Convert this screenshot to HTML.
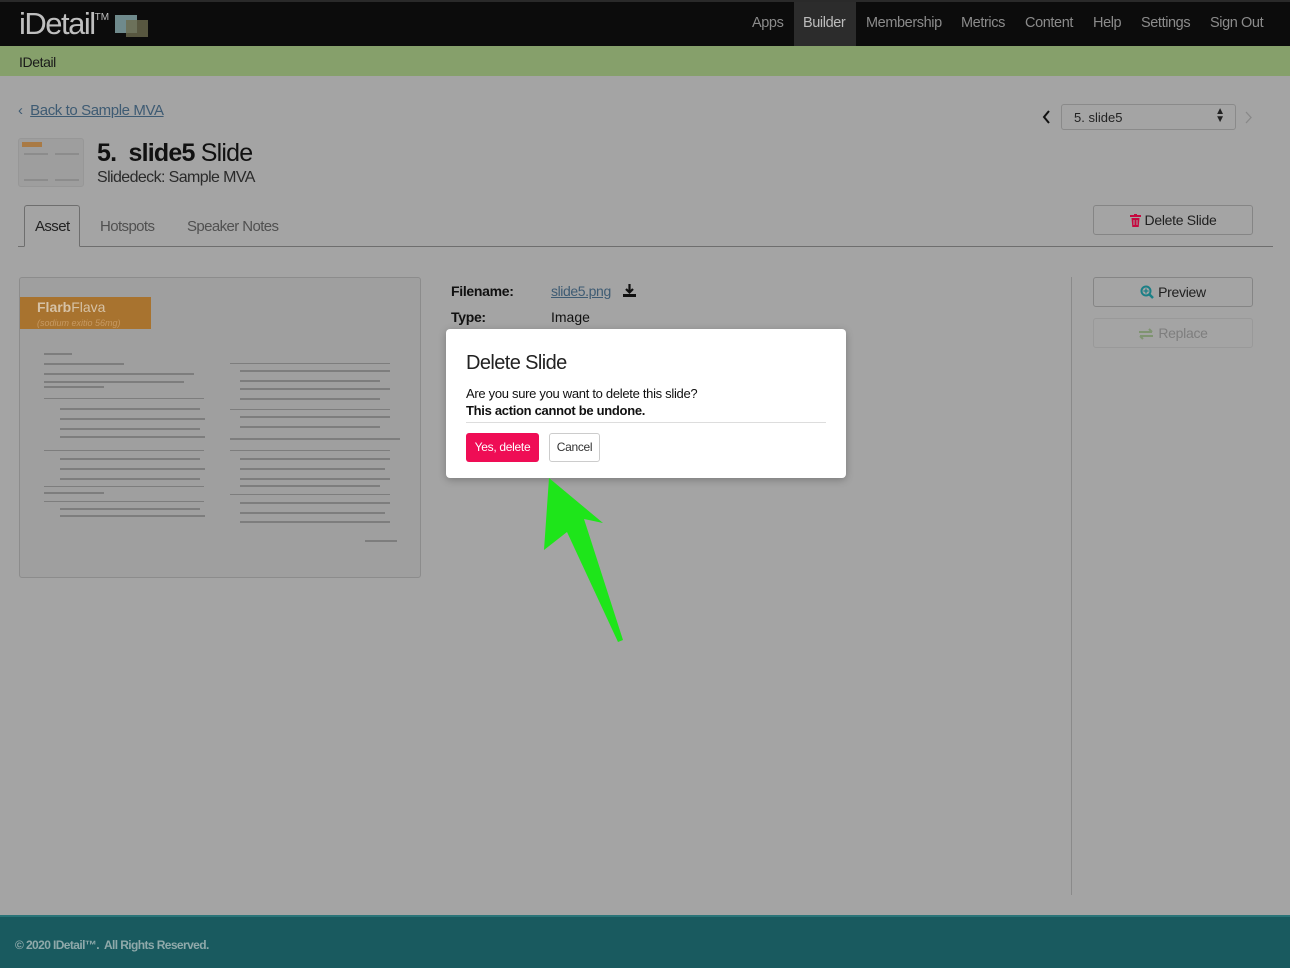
<!DOCTYPE html>
<html><head><meta charset="utf-8"><style>
*{box-sizing:border-box;margin:0;padding:0}
body{width:1290px;height:968px;overflow:hidden;background:#a4a4a4;font-family:"Liberation Sans",sans-serif;position:relative;color:#111}
.nav{position:absolute;left:0;top:0;width:1290px;height:46px;background:#0c0c0c;border-top:2px solid #2a2a2a}
.logo{position:absolute;left:19px;top:4px;font-size:31px;color:#bfbfbf;letter-spacing:-1.5px}
.logo sup{font-size:10px;vertical-align:top;position:relative;top:6px;letter-spacing:0}
.lb1{position:absolute;left:115px;top:13px;width:22px;height:18px;background:#6f8a8c}
.lb2{position:absolute;left:126px;top:18px;width:22px;height:17px;background:#6b6a4e;opacity:.8}
.nav a{position:absolute;top:13px;font-size:14.5px;color:#8b8b8b;text-decoration:none;letter-spacing:-.4px}
.builder{position:absolute;left:794px;top:0;width:62px;height:44px;background:#2c2c2c}
.green{position:absolute;left:0;top:46px;width:1290px;height:30px;background:#86a06b;font-size:14px;padding:8px 19px;color:#1a1a1a;letter-spacing:-.4px}
.back{position:absolute;left:18px;top:102px;font-size:15px;color:#3e5b73;letter-spacing:-.4px}
.back span{text-decoration:underline}
.thumb{position:absolute;left:18px;top:138px;width:66px;height:49px;background:#9e9e9e;border:1px solid #979797;border-radius:3px}
h1{position:absolute;left:97px;top:139px;font-size:25px;font-weight:normal;letter-spacing:-.8px}
h1 b{font-weight:bold}
.sub{position:absolute;left:97px;top:169px;font-size:16px;color:#2a2a2a;letter-spacing:-.6px}
.tabs{position:absolute;left:18px;top:246px;width:1255px;border-top:1px solid #6e6e6e}
.tab{position:absolute;top:218px;font-size:15px;color:#505050;letter-spacing:-.6px}
.tabact{position:absolute;left:24px;top:205px;width:56px;height:42px;border:1px solid #6e6e6e;border-bottom:1px solid #a4a4a4;background:#a4a4a4;border-radius:3px 3px 0 0}
.btn{position:absolute;border:1px solid #858585;border-radius:3px;background:#a4a4a4;font-size:14px;text-align:center;color:#1f1f1f;letter-spacing:-.3px}
.btn svg{vertical-align:-2px;margin-right:4px}
.sel{position:absolute;left:1061px;top:104px;width:175px;height:26px;border:1px solid #8a8a8a;border-radius:3px;font-size:13px;padding:5px 12px;color:#222}
.vline{position:absolute;left:1071px;top:277px;width:1px;height:618px;background:#8a8a8a}
.slide{position:absolute;left:19px;top:277px;width:402px;height:301px;background:#9f9f9f;border:1px solid #8c8c8c;border-radius:3px;overflow:hidden}
.flarb{position:absolute;left:0;top:19px;width:131px;height:32px;background:#a8732f;color:#d6c2a6;font-size:14px;padding:3px 17px;line-height:14px}
.flarb i{font-size:9px;color:#c79a63}
.ln{position:absolute;height:2px;background:#7d7d7d}
.footer{position:absolute;left:0;top:915px;width:1290px;height:53px;background:#195a5f;border-top:2px solid #2a7478}
.footer div{position:absolute;left:15px;top:21px;font-size:12px;color:#8fa9aa;font-weight:bold;letter-spacing:-.6px}
.modal{position:absolute;left:446px;top:329px;width:400px;height:149px;background:#fff;border-radius:4px;box-shadow:0 2px 8px rgba(0,0,0,.25)}
.modal h2{position:absolute;left:20px;top:23px;font-size:20px;font-weight:normal;color:#222;letter-spacing:-.6px}
.modal p{position:absolute;left:20px;font-size:13px;color:#111;letter-spacing:-.3px}
.hr{position:absolute;left:20px;top:93px;width:360px;height:1px;background:#ddd}
.yes{position:absolute;left:20px;top:104px;width:73px;height:29px;background:#ef0d55;border-radius:3px;color:#fff;font-size:12px;text-align:center;line-height:29px;letter-spacing:-.3px}
.cancel{position:absolute;left:103px;top:104px;width:51px;height:29px;border:1px solid #ccc;border-radius:3px;color:#333;font-size:12px;text-align:center;line-height:27px;letter-spacing:-.3px}
</style></head><body>
<div class="nav">
<div class="lb1"></div><div class="lb2"></div>
<div class="logo">iDetail<sup>TM</sup></div>
<div class="builder"></div>
<a style="left:752px">Apps</a><a style="left:803px;color:#bdbdbd">Builder</a><a style="left:866px">Membership</a><a style="left:961px">Metrics</a><a style="left:1025px">Content</a><a style="left:1093px">Help</a><a style="left:1141px">Settings</a><a style="left:1210px">Sign Out</a>
</div>
<div class="green">IDetail</div>
<div class="back">‹ &nbsp;<span>Back to Sample MVA</span></div>
<div class="thumb"><div style="position:absolute;left:3px;top:3px;width:20px;height:5px;background:#a97a45"></div><div style="position:absolute;left:5px;top:14px;width:24px;height:28px;border-top:2px solid #8c8c8c;border-bottom:2px solid #8c8c8c"></div><div style="position:absolute;left:36px;top:14px;width:24px;height:28px;border-top:2px solid #8c8c8c;border-bottom:2px solid #8c8c8c"></div></div>
<h1><b>5.&nbsp; slide5</b> Slide</h1>
<div class="sub">Slidedeck: Sample MVA</div>
<div class="tabs"></div>
<div class="tabact"></div>
<div class="tab" style="left:35px;color:#222">Asset</div>
<div class="tab" style="left:100px">Hotspots</div>
<div class="tab" style="left:187px">Speaker Notes</div>
<svg style="position:absolute;left:1042px;top:110px" width="9" height="14"><path d="M7 1L2 7l5 6" stroke="#111" stroke-width="2" fill="none"/></svg>
<div class="sel">5. slide5<span style="position:absolute;right:10px;top:3px;font-size:10px;line-height:8px">▲<br>▼</span></div>
<svg style="position:absolute;left:1245px;top:111px" width="8" height="13"><path d="M1 1l5 5.5L1 12" stroke="#888" stroke-width="1.3" fill="none"/></svg>
<div class="btn" style="left:1093px;top:205px;width:160px;height:30px;line-height:28px"><svg width="11" height="13"><rect x="0" y="1" width="11" height="2" fill="#c5093f"/><rect x="4" y="0" width="3" height="2" fill="#c5093f"/><path d="M1.5 4h8l-.8 9h-6.4z" fill="#c5093f"/><path d="M4 6v5M7 6v5" stroke="#a4a4a4" stroke-width="1"/></svg>Delete Slide</div>
<div class="btn" style="left:1093px;top:277px;width:160px;height:30px;line-height:28px"><svg width="14" height="14"><circle cx="6" cy="6" r="4.5" stroke="#1b7f86" stroke-width="2" fill="none"/><path d="M9.5 9.5l3.5 3.5" stroke="#1b7f86" stroke-width="2.5"/><path d="M6 3.5v5M3.5 6h5" stroke="#1b7f86" stroke-width="1.3"/></svg>Preview</div>
<div class="btn" style="left:1093px;top:318px;width:160px;height:30px;line-height:28px;border-color:#999;color:#7e7e7e"><svg width="16" height="12"><path d="M1 4h13M11 1l3 3M15 8H2M5 11L2 8" stroke="#7f9471" stroke-width="2" fill="none"/></svg>Replace</div>
<div class="vline"></div>
<div class="slide">
<div class="flarb"><b>Flarb</b>Flava<br><i>(sodium exitio 56mg)</i></div>
<div class="ln" style="left:24px;top:75px;width:28px"></div>
<div class="ln" style="left:24px;top:85px;width:80px"></div>
<div class="ln" style="left:24px;top:95px;width:150px"></div>
<div class="ln" style="left:24px;top:103px;width:140px"></div>
<div class="ln" style="left:24px;top:108px;width:60px"></div>
<div class="ln" style="left:24px;top:120px;width:160px;height:1px"></div>
<div class="ln" style="left:40px;top:130px;width:140px"></div><div class="ln" style="left:40px;top:140px;width:145px"></div><div class="ln" style="left:40px;top:150px;width:140px"></div><div class="ln" style="left:40px;top:158px;width:145px"></div>
<div class="ln" style="left:24px;top:172px;width:160px;height:1px"></div>
<div class="ln" style="left:40px;top:180px;width:140px"></div><div class="ln" style="left:40px;top:190px;width:145px"></div><div class="ln" style="left:40px;top:200px;width:140px"></div>
<div class="ln" style="left:24px;top:208px;width:160px;height:1px"></div>
<div class="ln" style="left:24px;top:214px;width:60px"></div>
<div class="ln" style="left:24px;top:223px;width:160px;height:1px"></div>
<div class="ln" style="left:40px;top:230px;width:140px"></div><div class="ln" style="left:40px;top:237px;width:145px"></div>
<div class="ln" style="left:210px;top:85px;width:160px;height:1px"></div>
<div class="ln" style="left:220px;top:92px;width:150px"></div><div class="ln" style="left:220px;top:102px;width:140px"></div><div class="ln" style="left:220px;top:110px;width:150px"></div><div class="ln" style="left:220px;top:120px;width:140px"></div>
<div class="ln" style="left:210px;top:131px;width:160px;height:1px"></div>
<div class="ln" style="left:220px;top:138px;width:150px"></div><div class="ln" style="left:220px;top:148px;width:140px"></div>
<div class="ln" style="left:210px;top:160px;width:170px"></div>
<div class="ln" style="left:210px;top:172px;width:160px;height:1px"></div>
<div class="ln" style="left:220px;top:180px;width:150px"></div><div class="ln" style="left:220px;top:190px;width:145px"></div><div class="ln" style="left:220px;top:200px;width:150px"></div><div class="ln" style="left:220px;top:207px;width:140px"></div>
<div class="ln" style="left:210px;top:216px;width:160px;height:1px"></div>
<div class="ln" style="left:220px;top:224px;width:150px"></div><div class="ln" style="left:220px;top:234px;width:145px"></div><div class="ln" style="left:220px;top:243px;width:150px"></div>
<div class="ln" style="left:345px;top:262px;width:32px"></div>
</div>
<div style="position:absolute;left:451px;top:283px;font-size:14px;font-weight:bold;letter-spacing:-.3px">Filename:</div>
<div style="position:absolute;left:551px;top:283px;font-size:14px;color:#3e5b73;text-decoration:underline;letter-spacing:-.4px">slide5.png</div>
<svg style="position:absolute;left:623px;top:284px" width="13" height="13"><path d="M6.5 0v8M3 5l3.5 3.5L10 5" stroke="#111" stroke-width="2.2" fill="none"/><path d="M0 10h13v3H0z" fill="#111"/></svg>
<div style="position:absolute;left:451px;top:309px;font-size:14px;font-weight:bold;letter-spacing:-.3px">Type:</div>
<div style="position:absolute;left:551px;top:309px;font-size:14px">Image</div>
<div class="modal">
<h2>Delete Slide</h2>
<p style="top:57px">Are you sure you want to delete this slide?</p>
<p style="top:74px;font-weight:bold">This action cannot be undone.</p>
<div class="hr"></div>
<div class="yes">Yes, delete</div>
<div class="cancel">Cancel</div>
</div>
<svg style="position:absolute;left:0;top:0" width="1290" height="968"><polygon points="549,478 603,523 584,519 623,640 618,642 567,532 544,550" fill="#1ee51a"/></svg>
<div class="footer"><div>© 2020 IDetail™.&nbsp; All Rights Reserved.</div></div>
</body></html>
